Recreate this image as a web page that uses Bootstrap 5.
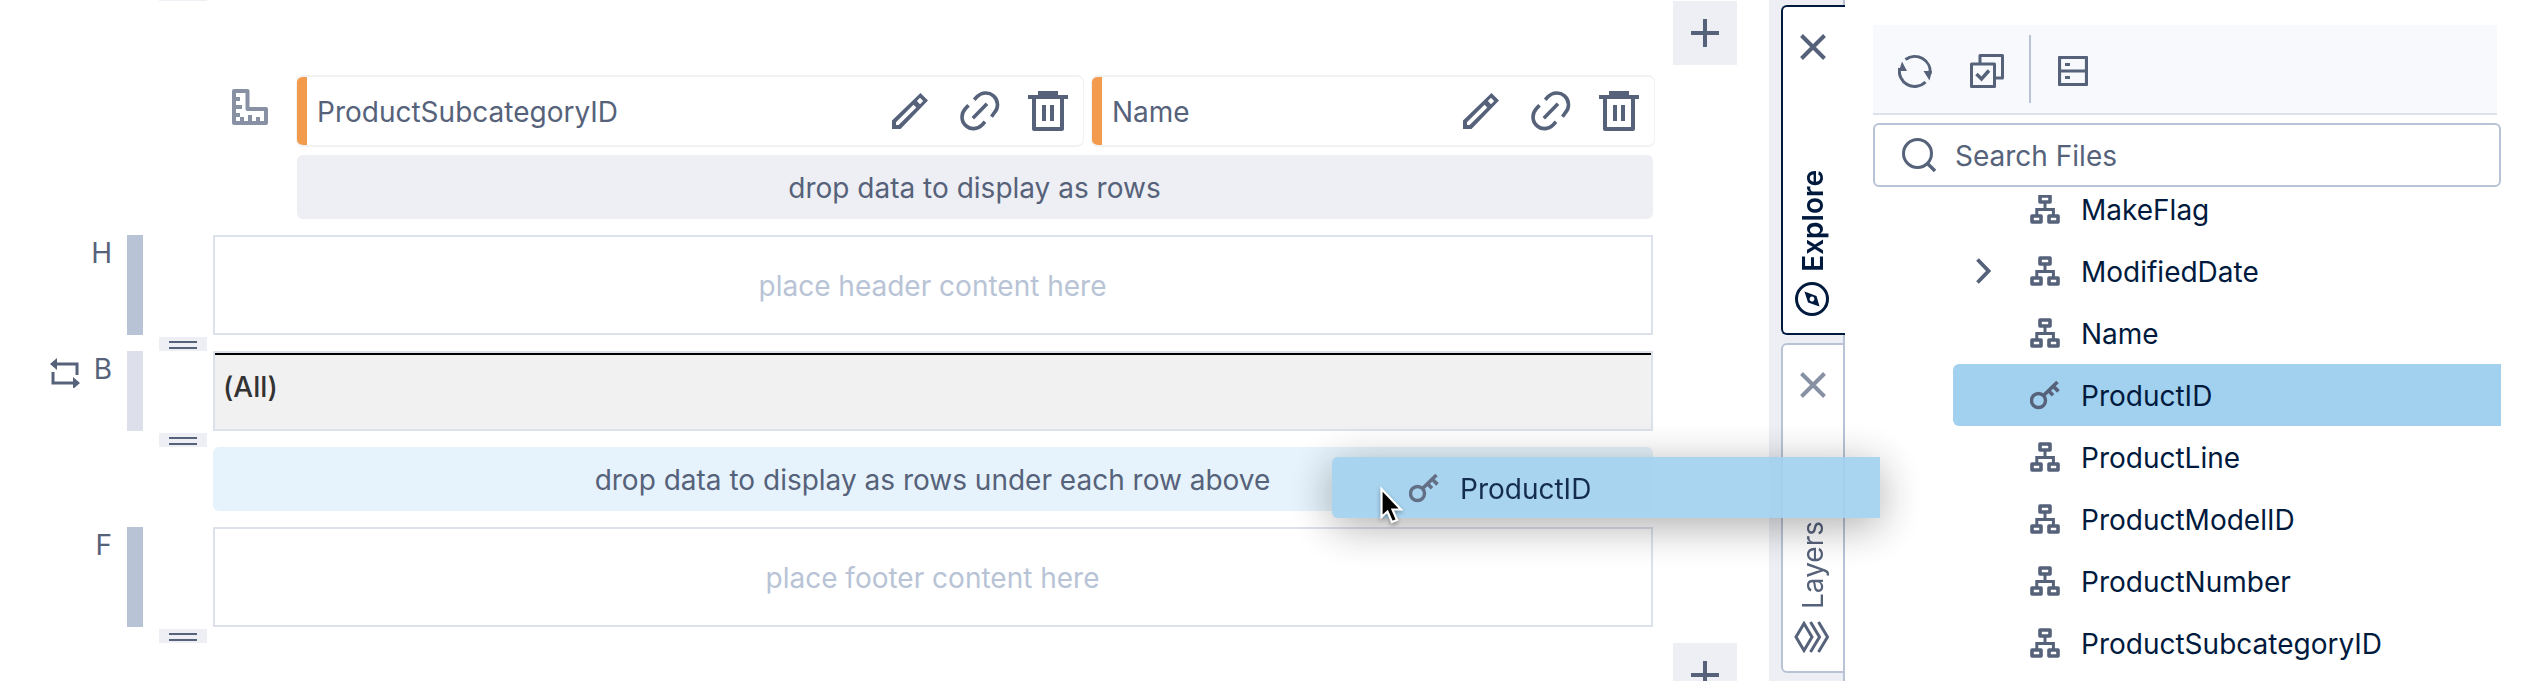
<!DOCTYPE html>
<html lang="en">
<head>
<meta charset="utf-8">
<title>Report designer</title>
<link rel="stylesheet" href="https://cdn.jsdelivr.net/npm/bootstrap@5.3.0/dist/css/bootstrap.min.css">
<style>
:root{--ink:#56627a;--navy:#001a3d;--line:#dde1ec;--steel:#b8c4d6;--mist:#eeeff4}
body{width:2527px;height:681px;font-family:Inter,sans-serif;font-size:28px;line-height:34px;color:var(--ink);background:#fff}
svg{display:block;fill:none;stroke:currentColor;flex:none}
.canvas{width:1769px;padding-top:75px}
.lead-space{width:297px;padding-right:29px}
.pill{height:72px;margin:0 -1px;border:2px solid #f2f2f3;border-width:2px 1px;border-radius:7px;padding-right:15px;overflow:hidden}
.pill-a{width:788px}.pill-b{width:564px;margin-left:8px}
.pill .caption-text{padding-top:2px}
.pill .i-mid{margin:0 28px 0 32px}
.accent{width:10px;background:#f39b4c;margin-right:10px}
.drop{height:64px;border-radius:6px;background:var(--mist);padding:2px 1px 0 0}
.drop-rows{margin:8px 116px 16px 297px}
.drop-under{margin:16px 116px 16px 213px;background:#e6f3fc}
.tag{width:112px;padding-top:1px;gap:14px}
.rail{width:16px;margin:0 70px 0 15px;background:var(--steel)}
.rail-soft{background:#dde0ea}
.band{width:1440px;border:2px solid var(--line)}
.tall{height:100px;padding:2px 1px 0 0}.short{height:80px}
.hint{color:#b8c4d6}
.total{background:#f1f1f1}
.total div{border-top:2px solid #000;color:#333;font-weight:500;padding:15px 0 0 8px}
.grip{left:159px;top:100%;margin-top:2px;width:48px;height:14px;background:var(--mist)}
.grip::before{content:"";display:block;margin:4px 10px;height:8px;border:solid var(--ink);border-width:2px 0}
.grip-cut{top:-15px}
.adder{left:1673px;width:64px;height:64px;background:var(--mist)}
.adder-top{top:1px}.adder-bottom{top:643px}
.tabs-col{width:76px;padding:5px 0 0 12px;background:var(--mist);border-right:2px solid var(--steel)}
.side-tab{width:64px;height:330px;margin-right:-2px;margin-bottom:8px;border:2px solid var(--steel);border-right:0;border-radius:6px 0 0 6px;background:#fff;padding-right:2px}
.side-tab.current{border-color:var(--navy);color:var(--navy);font-weight:600}
.side-tab.idle{border-right:2px solid var(--steel);padding-right:0}
.side-tab .x{margin-top:27px;color:var(--ink)}
.side-tab.idle .x{color:#8891a3}
.side-tab span{writing-mode:vertical-rl;transform:rotate(180deg);line-height:34px}
.files{width:682px;padding:25px 26px 0 28px}
.tools{width:624px;height:90px;background:#f7f9fc;border-bottom:2px solid var(--line);padding-left:25px}
.tools svg{margin-top:4px}
.vr-line{width:2px;height:68px;background:var(--steel);margin:0 27px 0 25px}
.finder{height:64px;margin-top:8px;border:2px solid var(--steel);border-radius:6px;padding-left:27px}
.finder span{margin-left:19px;padding-top:2px}
.tree{height:486px;margin-top:8px;padding-left:80px;color:var(--navy)}
.tree-in{margin-top:-17px}
.leaf{height:62px;padding-left:23px;border-radius:6px 0 0 6px}
.leaf .tw{width:54px}
.leaf svg{color:var(--ink)}
.leaf .nm{margin-left:21px;line-height:24px;padding-top:2px}
.leaf.on{background:#a2d1ef}
.ghost{left:1332px;top:457px;width:548px;height:61px;color:var(--navy);background:#a2d1ef;opacity:.91;box-shadow:0 8px 44px rgba(0,0,0,.36)}
.pointer{left:1378px;top:484px;filter:drop-shadow(0 2px 2px rgba(0,0,0,.35))}
</style>
</head>
<body class="overflow-hidden position-relative">
<svg width="0" height="0" class="position-absolute">
<symbol id="i-pencil" viewBox="0 0 36 36"><path d="M28.500 0L36 7.500L8.500 36H0V27.500zM4 29.300V32H6.600L24.300 14.600L21.500 11.700zM28 4.800L24.900 8L28 11.200L31.200 8z" fill="currentColor" fill-rule="evenodd" stroke="none"/></symbol>
<symbol id="i-link" viewBox="0 0 40 40"><path d="M14.200 8.800l3-3.200c4.500-4.500 11.500-4.800 16.300-.800c5 4.500 5.300 12 1 16.700l-3 4.200M8.500 14.200l-3 3.300c-4.700 5-4.700 12.500 .300 17.100c4.800 4.300 11.700 4 16.200-.600l3-3.200M12.800 27.200L27 12.800" stroke-width="3.600"/></symbol>
<symbol id="i-trash" viewBox="0 0 40 40"><path d="M0 4h10V0h20v4h10v4h-4v30q0 2-2 2H6q-2 0-2-2V8H0zM8 8v28h24V8zM14 14h4v16h-4zM22 14h4v16h-4z" fill="currentColor" fill-rule="evenodd" stroke="none"/></symbol>
<symbol id="i-tree" viewBox="0 0 30 30"><path d="M10 2h10v6H10zM2 22h9v6H2zM19 22h9v6h-9z" stroke-width="3.600" stroke-linejoin="round"/><path d="M15 9v6M6.800 22v-6.500h16.600V22" stroke-width="3"/></symbol>
<symbol id="i-key" viewBox="0 0 30 30"><circle cx="8.500" cy="20.500" r="7" stroke-width="3.400"/><path d="M13.500 15.500L27.500 2M23.200 6.200l5.300 5.200M18.500 10.800l4.500 4.500" stroke-width="3.600"/></symbol>
<symbol id="i-x" viewBox="0 0 26 26"><path d="M1.500 1.500l23 23M24.500 1.500l-23 23" stroke-width="4"/></symbol>
<symbol id="i-plus" viewBox="0 0 28 28"><path d="M14 0v28M0 14h28" stroke-width="4"/></symbol>
</svg>

<div class="d-flex h-100">
  <main class="canvas position-relative flex-shrink-0">
    <div class="grip grip-cut position-absolute"></div>
    <div class="adder adder-top position-absolute d-flex align-items-center justify-content-center"><svg width="28" height="28"><use href="#i-plus"/></svg></div>
    <div class="adder adder-bottom position-absolute d-flex align-items-center justify-content-center"><svg width="28" height="28"><use href="#i-plus"/></svg></div>

    <div class="d-flex">
      <div class="lead-space d-flex justify-content-end align-items-start">
        <svg width="36" height="36" viewBox="0 0 36 36" style="margin-top:14px;color:#8891a3"><path d="M2 2h13.500v18H34v14H2z" stroke-width="4" stroke-linejoin="round"/><path d="M4 10h4M4 18h6M4 26h4M10 32v-4M18 32v-6M26 32v-4" stroke-width="4"/></svg>
      </div>
      <div class="pill pill-a d-flex align-items-center">
        <div class="accent align-self-stretch"></div><div class="caption-text flex-grow-1">ProductSubcategoryID</div>
        <svg width="36" height="36"><use href="#i-pencil"/></svg><svg width="40" height="40" class="i-mid"><use href="#i-link"/></svg><svg width="40" height="40"><use href="#i-trash"/></svg>
      </div>
      <div class="pill pill-b d-flex align-items-center">
        <div class="accent align-self-stretch"></div><div class="caption-text flex-grow-1">Name</div>
        <svg width="36" height="36"><use href="#i-pencil"/></svg><svg width="40" height="40" class="i-mid"><use href="#i-link"/></svg><svg width="40" height="40"><use href="#i-trash"/></svg>
      </div>
    </div>
    <div class="drop drop-rows d-flex align-items-center justify-content-center">drop data to display as rows</div>

    <section class="d-flex position-relative">
      <div class="tag d-flex justify-content-end">H</div><div class="rail"></div>
      <div class="band tall hint d-flex align-items-center justify-content-center">place header content here</div>
      <div class="grip position-absolute"></div>
    </section>
    <section class="d-flex position-relative mt-3">
      <div class="tag d-flex justify-content-end">
        <svg width="30" height="30" viewBox="0 0 30 30" style="margin-top:6px"><path d="M5 6h22v11M25 25H3V14" stroke-width="3"/><path d="M0 6L7 0v12zM30 25l-7-6v12z" fill="currentColor" stroke="none"/></svg>B</div>
      <div class="rail rail-soft"></div>
      <div class="band short total"><div>(All)</div></div>
      <div class="grip position-absolute"></div>
    </section>
    <div class="drop drop-under d-flex align-items-center justify-content-center">drop data to display as rows under each row above</div>
    <section class="d-flex position-relative">
      <div class="tag d-flex justify-content-end">F</div><div class="rail"></div>
      <div class="band tall hint d-flex align-items-center justify-content-center">place footer content here</div>
      <div class="grip position-absolute"></div>
    </section>
  </main>

  <nav class="tabs-col flex-shrink-0">
    <div class="side-tab current d-flex flex-column align-items-center">
      <svg class="x" width="26" height="26"><use href="#i-x"/></svg>
      <span class="mt-auto">Explore</span>
      <svg width="34" height="34" viewBox="0 0 34 34" style="margin:10px 3px 17px 0"><circle cx="17" cy="17" r="15.500" stroke-width="3"/><path d="M9.500 9.500L21.500 14l3 10.500L13 20.500zM17 14.600a2.400 2.400 0 1 0 .01 0z" fill="currentColor" fill-rule="evenodd" stroke="none"/></svg>
    </div>
    <div class="side-tab idle d-flex flex-column align-items-center">
      <svg class="x" width="26" height="26"><use href="#i-x"/></svg>
      <span class="mt-auto">Layers</span>
      <svg width="36" height="32" viewBox="0 0 36 32" style="margin:12px 3px 18px 0"><path d="M10 2.500L18 16L10 29.500L2 16zM16.500 1L25.500 16L16.500 31M24.500 1L33.500 16L24.500 31" stroke-width="3"/></svg>
    </div>
  </nav>

  <aside class="files flex-shrink-0">
    <div class="tools d-flex align-items-center">
      <svg width="34" height="34" viewBox="0 0 34 34"><path d="M7.500 5.500A15.400 15.400 0 0 1 32 20M27.500 28A15.400 15.400 0 0 1 1.600 14" stroke-width="3"/><path d="M4 7.500L9 17H1zM25.500 17H34l-2.500 9.500z" fill="currentColor" stroke="none"/></svg>
      <svg width="34" height="34" viewBox="0 0 34 34" style="margin-left:38px"><path d="M1.500 10h23v22.500h-23zM10 10V1.500h22.500V24H25" stroke-width="3" stroke-linejoin="round"/><path d="M6.500 20l5 5L19 16.500" stroke-width="3.500"/></svg>
      <div class="vr-line"></div>
      <svg width="30" height="30" viewBox="0 0 30 30"><path d="M1.500 1.500h27v27h-27zM1.500 15h27" stroke-width="3.200" stroke-linejoin="round"/><path d="M7 8.500h5M7 21.500h5" stroke-width="3.200"/></svg>
    </div>
    <div class="finder d-flex align-items-center">
      <svg width="34" height="34" viewBox="0 0 34 34"><circle cx="15.500" cy="15.500" r="14" stroke-width="3"/><path d="M25 25l8 8" stroke-width="3.400"/></svg>
      <span>Search Files</span>
    </div>
    <div class="tree overflow-hidden"><div class="tree-in">
      <div class="leaf d-flex align-items-center"><div class="tw"></div><svg width="30" height="30"><use href="#i-tree"/></svg><span class="nm">MakeFlag</span></div>
      <div class="leaf d-flex align-items-center"><div class="tw"><svg width="15" height="26" viewBox="0 0 15 26"><path d="M1.500 1.500L12.500 13L1.500 24.500" stroke-width="3.800"/></svg></div><svg width="30" height="30"><use href="#i-tree"/></svg><span class="nm">ModifiedDate</span></div>
      <div class="leaf d-flex align-items-center"><div class="tw"></div><svg width="30" height="30"><use href="#i-tree"/></svg><span class="nm">Name</span></div>
      <div class="leaf on d-flex align-items-center"><div class="tw"></div><svg width="30" height="30"><use href="#i-key"/></svg><span class="nm">ProductID</span></div>
      <div class="leaf d-flex align-items-center"><div class="tw"></div><svg width="30" height="30"><use href="#i-tree"/></svg><span class="nm">ProductLine</span></div>
      <div class="leaf d-flex align-items-center"><div class="tw"></div><svg width="30" height="30"><use href="#i-tree"/></svg><span class="nm">ProductModelID</span></div>
      <div class="leaf d-flex align-items-center"><div class="tw"></div><svg width="30" height="30"><use href="#i-tree"/></svg><span class="nm">ProductNumber</span></div>
      <div class="leaf d-flex align-items-center"><div class="tw"></div><svg width="30" height="30"><use href="#i-tree"/></svg><span class="nm">ProductSubcategoryID</span></div>
    </div></div>
  </aside>
</div>

<div class="leaf ghost position-absolute d-flex align-items-center"><div class="tw"></div><svg width="30" height="30"><use href="#i-key"/></svg><span class="nm">ProductID</span></div>
<svg class="pointer position-absolute" width="28" height="42" viewBox="0 0 28 42"><path d="M3.500 5v28l6-5.500 4.500 10.500 5-2-4.500-10.500h8.500z" fill="#000" stroke="#fff" stroke-width="2.200"/></svg>
<script src="https://cdn.jsdelivr.net/npm/bootstrap@5.3.0/dist/js/bootstrap.bundle.min.js"></script>
</body>
</html>
